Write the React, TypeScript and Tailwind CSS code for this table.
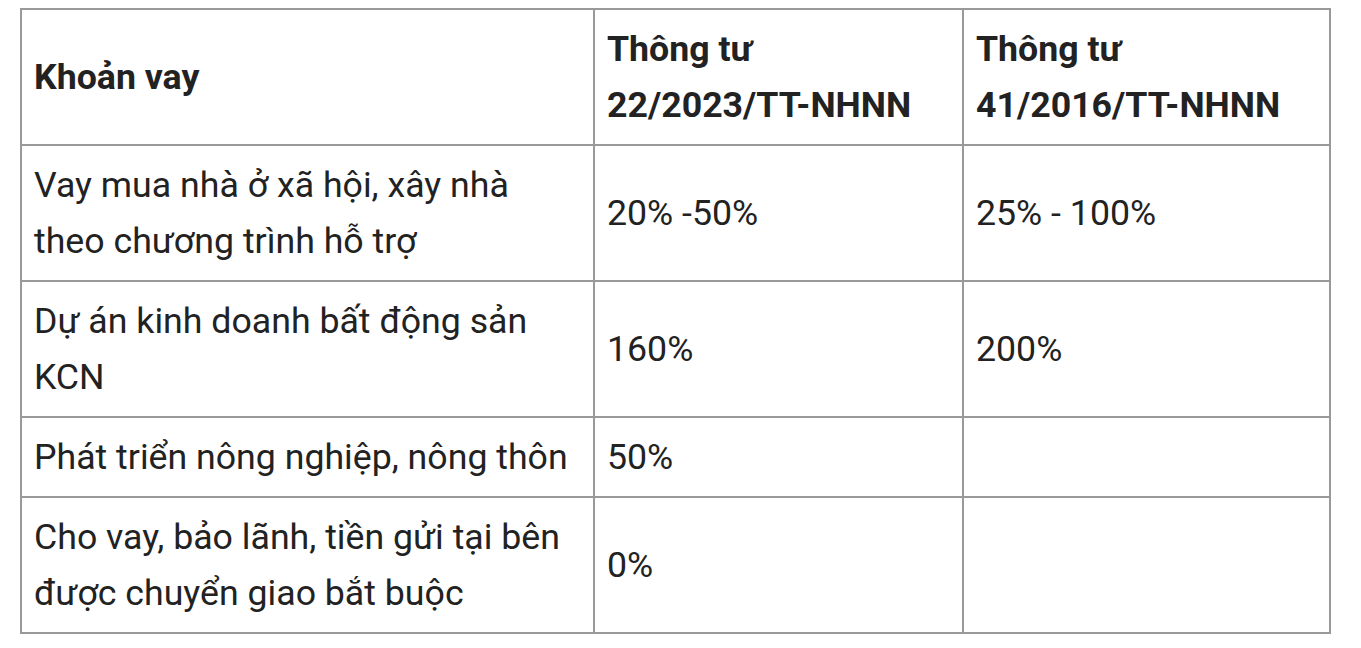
import React from 'react';

// Rows of the comparison table
const rows = [
  { loan: 'Vay mua nhà ở xã hội, xây nhà theo chương trình hỗ trợ', a: '20% -50%', b: '25% - 100%' },
  { loan: 'Dự án kinh doanh bất động sản KCN', a: '160%', b: '200%' },
  { loan: 'Phát triển nông nghiệp, nông thôn', a: '50%', b: '' },
  { loan: 'Cho vay, bảo lãnh, tiền gửi tại bên được chuyển giao bắt buộc', a: '0%', b: '' },
];

const cell = 'border-2 border-[#999999] px-[12px] py-[11px] align-middle';

export default function App() {
  return (
    <div className="w-[1361px] h-[648px] bg-white pt-[8px] pl-[20px] font-['Roboto',sans-serif] text-[#222222] text-[35.7px] leading-[56px]">
      <table className="border-collapse w-[1309px] table-fixed">
        <colgroup>
          <col className="w-[573px]" />
          <col className="w-[369px]" />
          <col className="w-[367px]" />
        </colgroup>
        <thead>
          <tr>
            <th className={`${cell} text-left font-bold`}>Khoản vay</th>
            <th className={`${cell} text-left font-bold`}>Thông tư 22/2023/TT-NHNN</th>
            <th className={`${cell} text-left font-bold`}>Thông tư 41/2016/TT-NHNN</th>
          </tr>
        </thead>
        <tbody>
          {rows.map((r, i) => (
            <tr key={i}>
              <td className={cell}>{r.loan}</td>
              <td className={cell}>{r.a}</td>
              <td className={cell}>{r.b}</td>
            </tr>
          ))}
        </tbody>
      </table>
    </div>
  );
}
